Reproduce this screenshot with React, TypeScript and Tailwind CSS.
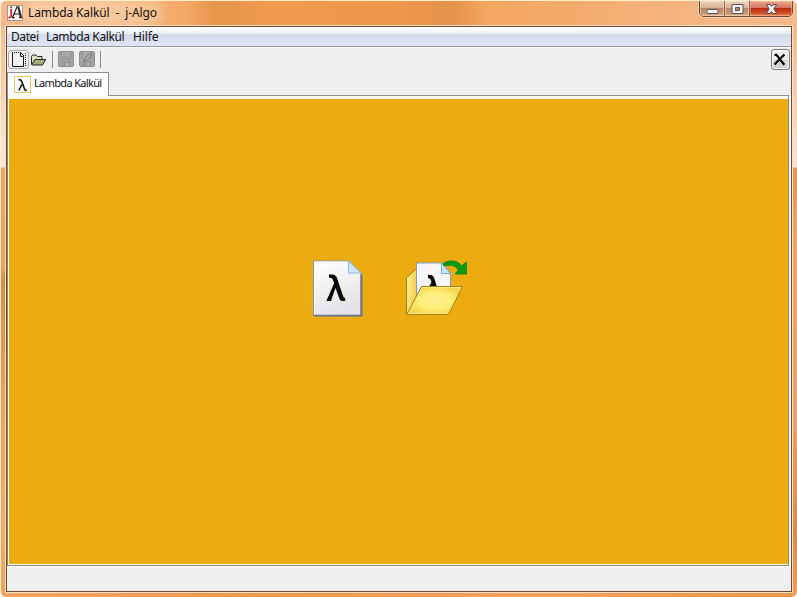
import React from "react";

function AppLogo() {
  return (
    <svg width="16" height="16" viewBox="0 0 16 16" className="shrink-0">
      <rect x="0.5" y="0.5" width="15" height="15" fill="#fafafa" stroke="#a8948a" />
      <path d="M4.2 4v6.5c0 1.8-1 2.2-2.7 2M4.2 1.3v1.6" fill="none" stroke="#d3202a" strokeWidth="1.8" />
      <path d="M5.5 12.8L10 1.8h1.7l3 11M7.5 9h5.5M5 12.7h2.6M12 12.7h3.4M11.2 3l2.2 9.5" fill="none" stroke="#171717" strokeWidth="1.2" />
    </svg>
  );
}

function TitleBar() {
  return (
    <header className="flex h-[24px] shrink-0 items-start justify-between pl-[2px]">
      <div className="flex items-center gap-[5px] pt-[4px]">
        <AppLogo />
        <span className="whitespace-pre rounded-full bg-[#ffe2c0]/40 text-[12px] leading-[16px] tracking-[-0.12px] shadow-[0_0_9px_6px_rgba(255,226,192,0.4)]">Lambda Kalkül  -  j-Algo</span>
      </div>
      <div className="-mt-px flex h-[17px] w-[94px] overflow-hidden rounded-b-[5px] border border-[#69483a] shadow-[0_0_0_1px_rgba(255,224,192,0.6)]">
        <div className="flex w-[25px] items-center justify-center border-r border-[#805d4a] bg-[linear-gradient(#eed1bc_0%,#dcb090_47%,#b8865f_50%,#d9a77d_100%)] shadow-[inset_0_0_0_1px_rgba(255,235,215,0.5)]">
          <svg width="13" height="13"><rect x="1" y="7.5" width="11" height="4" rx="0.8" fill="#f5f5f5" stroke="#59505c" /></svg>
        </div>
        <div className="flex w-[25px] items-center justify-center border-r border-[#805d4a] bg-[linear-gradient(#eed1bc_0%,#dcb090_47%,#b8865f_50%,#d9a77d_100%)] shadow-[inset_0_0_0_1px_rgba(255,235,215,0.5)]">
          <svg width="13" height="13"><path d="M1 2.5h11v9H1zM4.5 5.5v3h4v-3z" fill="#f5f5f5" fillRule="evenodd" stroke="#59505c" strokeLinejoin="round" /></svg>
        </div>
        <div className="flex flex-1 items-center justify-center bg-[linear-gradient(#eba58e_0%,#d47560_46%,#b82b10_50%,#cc4a27_78%,#e98652_100%)] shadow-[inset_0_0_0_1px_rgba(255,200,170,0.5)]">
          <svg width="13" height="13"><path d="M1.5 2.5h3.4l1.6 1.8 1.6-1.8h3.4L8.9 6.9l2.8 4.6H8.2L6.5 9.6 4.8 11.5H1.3l2.8-4.6z" fill="#f6f4f4" stroke="#5e4650" strokeLinejoin="round" /></svg>
        </div>
      </div>
    </header>
  );
}

function MenuBar() {
  return (
    <nav className="flex h-[21px] shrink-0 gap-[8px] border-b border-white bg-[linear-gradient(#ffffff_0px,#f7f9fd_3px,#e8edf6_7px,#d3daed_7px,#e0e6f5_19px,#989898_19px)] pl-[4px] text-[12px] leading-[20px]">
      <span className="w-[27px] whitespace-nowrap tracking-[-0.4px]">Datei</span>
      <span className="w-[79px] whitespace-nowrap tracking-[-0.36px]">Lambda Kalkül</span>
      <span className="whitespace-nowrap tracking-[-0.1px]">Hilfe</span>
    </nav>
  );
}

function DisabledIcon({ pencil }: { pencil: boolean }) {
  return (
    <svg width="16" height="16" viewBox="0 0 16 16" className="block">
      <rect x="0.5" y="0.5" width="15" height="15" rx="1.5" fill="#a3a3a3" stroke="#8f8f8f" />
      <path d="M3.5 1v6.5h9V1" fill="#adadad" stroke="#949494" />
      <path d="M4.5 15v-4h7v4" fill="#acacac" stroke="#8d8d8d" />
      <path d="M5 3.5h6M5 5.5h6" stroke="#9c9c9c" />
      <path d="M6.5 12v3" stroke="#858585" />
      {pencil && <path d="M5 10.5l.8-2.7L11 2.2l1.8 1.6-5.2 5.7z" fill="#b5b5b5" stroke="#757575" />}
    </svg>
  );
}

function ToolBar() {
  return (
    <div className="flex h-[24px] shrink-0 items-start justify-between pl-[1px] pr-[1px]">
      <div className="flex h-[23px] items-center">
        <div className="flex h-[19px] w-[21px] items-center justify-center rounded-[3px] border border-[#adadad] bg-[#f4f4f4]">
          <svg width="18" height="17" viewBox="0 0 18 17">
            <path d="M2 2h9l3 3v11H2z" fill="#f2f2f2" />
            <path d="M2.5 2v13.5h11V5.5h-3V2" fill="none" stroke="#161616" />
            <path d="M2 1.5h10M15.5 2v13" stroke="#111" strokeDasharray="1 1" />
            <path d="M11 2l3 3" stroke="#111" />
          </svg>
        </div>
        <svg className="ml-[1px]" width="17" height="16" viewBox="0 0 17 16">
          <path d="M1.5 12.5v-8l1-1.5h3.4l1.5 1.5H12v3" fill="#dfe1b9" stroke="#252920" strokeLinejoin="round" />
          <path d="M1.8 12.6L4.9 7.5h10.8l-3.2 5.5H2z" fill="#a9ac83" stroke="#252920" strokeLinejoin="round" />
        </svg>
        <div className="ml-[5px] h-[17px] w-px bg-[#8a8a8a]" />
        <div className="mb-[2px] ml-[5px]"><DisabledIcon pencil={false} /></div>
        <div className="mb-[2px] ml-[5px]"><DisabledIcon pencil /></div>
        <div className="ml-[5px] h-[17px] w-px bg-[#8a8a8a]" />
      </div>
      <div className="mt-[1px] flex h-[21px] w-[19px] items-center justify-center rounded-[3px] border border-[#7c7c7c] bg-[linear-gradient(#f5f5f5_0%,#ececec_50%,#d8d8d8_51%,#d2d2d2_100%)] pr-[2px] shadow-[inset_0_0_0_1px_#fafafa]">
        <svg width="13" height="13" viewBox="0 0 13 13"><path d="M1.5 1.8h2l3.4 4.6 4.4 5.3M11.5 1.5L6.8 6 1.5 11.5" fill="none" stroke="#050505" strokeWidth="2.2" /></svg>
      </div>
    </div>
  );
}

function Tabs() {
  return (
    <div className="mr-[2px] flex h-[24px] shrink-0">
      <div className="flex w-[102px] items-center border-l border-r border-t border-[#8c919a] bg-white pl-[6px]">
        <svg width="17" height="17" viewBox="0 0 17 17" className="shrink-0">
          <rect x="0.5" y="0.5" width="16" height="16" fill="#fff" stroke="#e6c868" />
          <path d="M4.5 3.8c2-.6 2.8.2 3.5 2.2l2.5 7c.4 1.3 1 1.6 2.2 1.2M8.5 7.5l-3.7 7" fill="none" stroke="#171717" strokeWidth="1.6" />
        </svg>
        <span className="-mt-[3px] ml-[3px] whitespace-nowrap text-[11px] leading-[18px] tracking-[-0.66px]">Lambda Kalkül</span>
      </div>
      <div className="flex-1 border-b border-[#8c919a]" />
    </div>
  );
}

function NewDocument() {
  return (
    <svg width="54" height="61" viewBox="0 0 54 61">
      <defs>
        <linearGradient id="paper" x1="0" y1="0" x2="0.3" y2="1">
          <stop stopColor="#fff" /><stop offset="0.65" stopColor="#ededf0" /><stop offset="1" stopColor="#e4e4e8" />
        </linearGradient>
      </defs>
      <path d="M3 4h36l13 13v41H3z" fill="#70707c" opacity="0.45" />
      <path d="M2.5 2h35l12.5 12v42.5H2.5z" fill="url(#paper)" stroke="#8594b3" />
      <path d="M50.2 15v41.5H2.5" fill="none" stroke="#6c7294" strokeWidth="1.5" />
      <path d="M3.5 55V3h34" fill="none" stroke="#fff" />
      <path d="M37.5 2v12H50z" fill="#d0e5ff" stroke="#8cb5e1" />
      <path d="M18 15.5h3.3c2.9 0 4.2 1.8 5.2 5l5.2 15.6c.7 2 1.2 2.9 2.5 2.9v3h-2.7c-2.2 0-2.8-1.2-3.5-3.4L24.5 29l-4.6 13h-4.5l7.7-17.7-.7-2.2c-.8-2.4-1.6-3.3-3.2-3.3H18z" fill="#050505" />
    </svg>
  );
}

function OpenDocument() {
  return (
    <svg width="64" height="61" viewBox="0 0 64 61">
      <defs>
        <linearGradient id="folderback" x1="0" y1="0" x2="1" y2="0.3"><stop stopColor="#fff5a0" /><stop offset="1" stopColor="#efc93c" /></linearGradient>
        <radialGradient id="folderfront"><stop stopColor="#fff291" /><stop offset="0.6" stopColor="#ffed77" /><stop offset="1" stopColor="#f6d850" /></radialGradient>
      </defs>
      <path d="M1.5 55V19l9-8.5h3V55z" fill="url(#folderback)" stroke="#a78218" />
      <path d="M11.5 51V4H37l8.5 10v29h-34z" fill="#f6f6f9" stroke="#829ac2" />
      <path d="M36.5 4v10.5h9z" fill="#cbe2ff" stroke="#79aada" />
      <path d="M23 16h2.3c2.4 0 3.4 1.4 4.2 4l2.6 8.5h-4l-.3-1.5-.8 1.5h-3.5l3-5.5-.5-1.3c-.5-1.8-1.2-2.5-2.2-2.5H23z" fill="#070707" />
      <path d="M1.7 55.5L16.5 27.5H57.5L43.5 55.5z" fill="url(#folderfront)" stroke="#a78218" strokeLinejoin="round" />
      <path d="M17.5 28.5h38.5M3.5 54.3h39" fill="none" stroke="#fff49e" opacity="0.7" />
      <path d="M38.5 4.5C42 .7 54 .8 56.3 7L61.5 3v12H50l3-3.5c-1.5-5-6-6-14-4.5z" fill="#0a9a0d" stroke="#178a14" />
    </svg>
  );
}

export default function App() {
  return (
    <div className="h-[597px] w-[797px] bg-white">
      <div className="flex h-full w-full flex-col overflow-hidden rounded-[6px] border-l border-t border-[#fff0cc] pb-[4px] pl-[4px] pr-[4px] font-['Noto_Sans',sans-serif] text-[#111] [background:linear-gradient(90deg,#f6b98c_0px,#f5b987_100px,#f4a968_185px,#e79549_215px,#f09a4e_270px,#ee974b_400px,#e5924a_450px,#f4a660_485px,#f4ad6f_590px,#f5b682_700px,#f5ba8d_797px)_0_0/100%_25px_no-repeat,linear-gradient(#f4bc92_0px,#fae8dc_141px,#eea365_142px,#eba164_240px,#dc8d4d_254px,#eda064_380px,#f3a96d_500px,#f0a059_572px)_0_25px/5px_100%_no-repeat,linear-gradient(#f3ba8c_0px,#f9e5d3_141px,#e9954b_142px,#f2a263_215px,#ef9e61_400px,#df8b45_510px,#f0a05b_572px)_100%_25px/5px_100%_no-repeat,linear-gradient(90deg,#f3a361,#ef9850_30%,#f1a05b_70%,#ec9549)]">
        <TitleBar />
        <main className="flex min-h-0 flex-1 flex-col border border-[#ffe1c2]">
          <div className="flex min-h-0 flex-1 flex-col border border-[#74482f] bg-[#efefef]">
            <MenuBar />
            <ToolBar />
            <Tabs />
            <div className="bg-white pr-[2px]">
              <section className="flex h-[470px] flex-col border-b border-l border-r border-[#8b8778] bg-white pb-px pl-px pt-[3px]">
                <div className="flex flex-1 items-start bg-[#ecac0f] pl-[302px] pt-[160px]">
                  <NewDocument />
                  <div className="ml-[40px]"><OpenDocument /></div>
                </div>
              </section>
            </div>
            <footer className="flex-1 border-t border-white bg-[#efefef]" />
          </div>
        </main>
      </div>
    </div>
  );
}
